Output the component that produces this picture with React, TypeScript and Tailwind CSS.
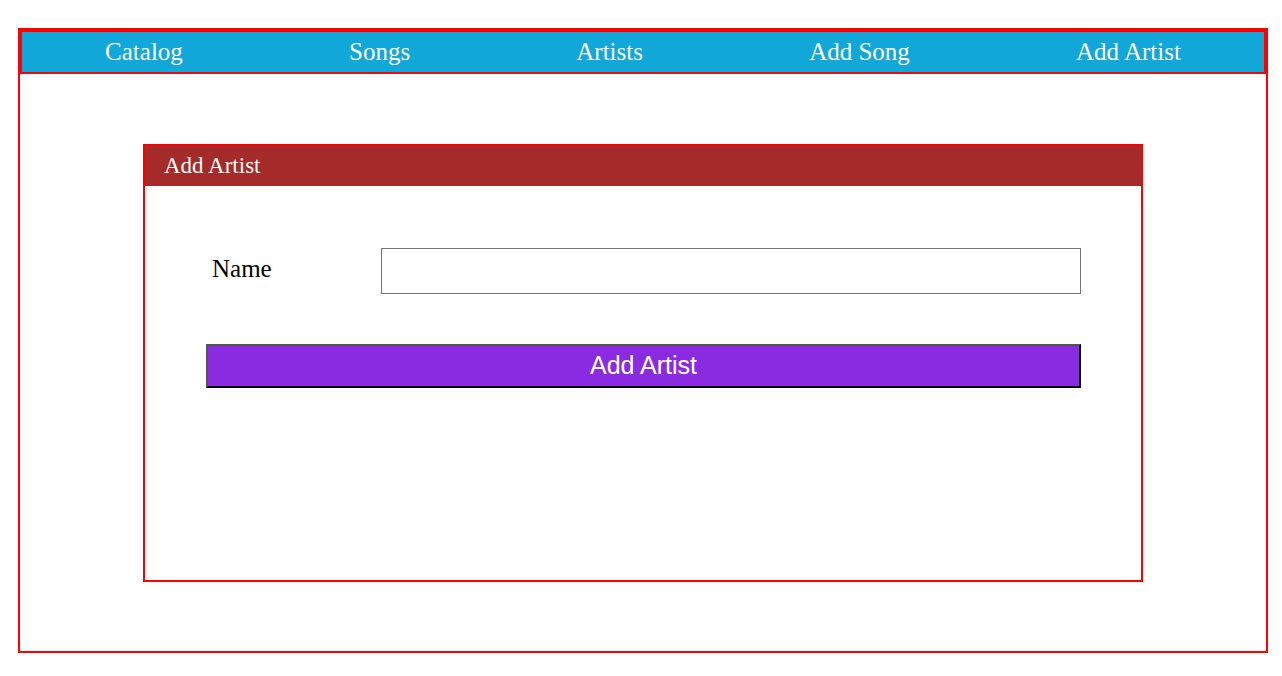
import React, { useState } from 'react';

const navItems = ['Catalog', 'Songs', 'Artists', 'Add Song', 'Add Artist'];

const App: React.FC = () => {
  const [name, setName] = useState('');

  return (
    <div className="min-h-[676px] bg-white pl-[18px] pt-[28px] font-['Liberation_Serif','Times_New_Roman',serif]">
      <div className="flex h-[625px] w-[1250px] flex-col border-2 border-[#ff0000]">
        <nav className="flex h-[44px] items-center justify-around border-2 border-[#ff0000] bg-[#11a7d9] text-[25px] text-white">
          {navItems.map((item) => (
            <a key={item} href="#" className="leading-normal">
              {item}
            </a>
          ))}
        </nav>

        <div className="mx-auto mt-[70px] h-[438px] w-[1000px] border-2 border-[#ff0000]">
          <div className="flex h-[40px] items-center bg-[#a52a2a] pl-[19px] text-[23px] text-white">
            Add Artist
          </div>

          <form
            className="ml-[61px] mt-[62px] w-[875px]"
            onSubmit={(e) => e.preventDefault()}
          >
            <div className="flex items-start">
              <label htmlFor="name" className="w-[175px] pl-[6px] pt-[2px] text-[25px] leading-normal text-black">
                Name
              </label>
              <input
                id="name"
                type="text"
                value={name}
                onChange={(e) => setName(e.target.value)}
                className="h-[46px] w-[700px] border border-[#767676] px-2 text-[18px] outline-none"
              />
            </div>

            <button
              type="submit"
              className="mt-[50px] h-[44px] w-[875px] border-2 border-b-black border-l-[#555555] border-r-black border-t-[#555555] bg-[#8a2be2] font-['Liberation_Sans',Arial,sans-serif] text-[25px] text-white"
            >
              Add Artist
            </button>
          </form>
        </div>
      </div>
    </div>
  );
};

export default App;
